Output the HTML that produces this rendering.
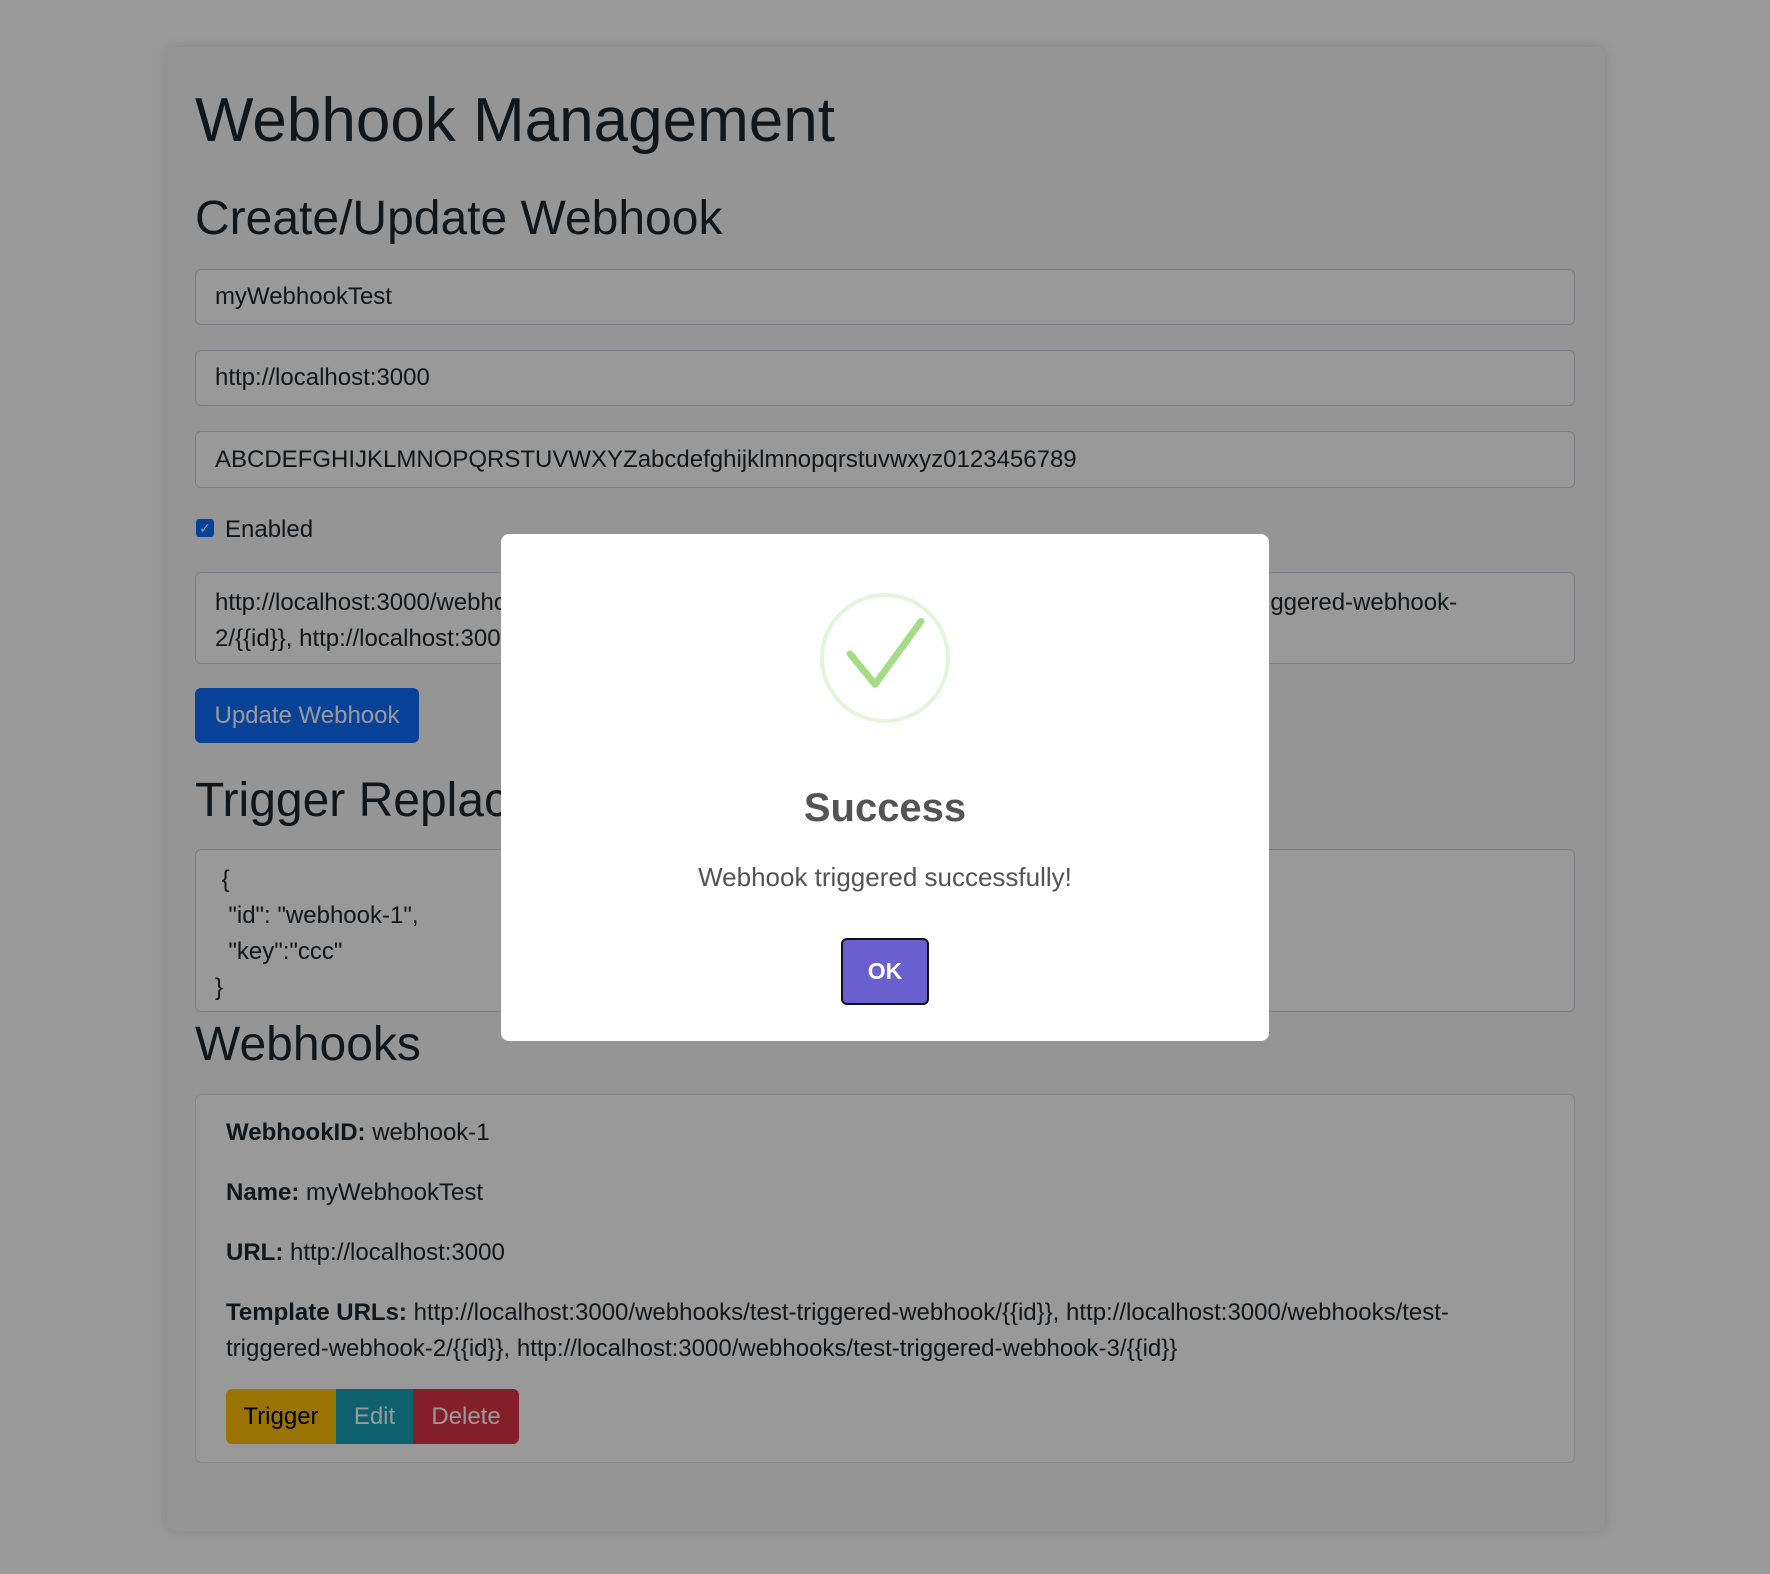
<!DOCTYPE html>
<html><head><meta charset="utf-8"><style>
*{box-sizing:border-box;margin:0;padding:0}
body{width:1770px;height:1574px;background:#fff;font-family:"Segoe UI","Liberation Sans",sans-serif;color:#212529;position:relative;overflow:hidden}
.card{position:absolute;left:167px;top:47px;width:1438px;height:1484px;background:#f8f9fa;border-radius:8px;box-shadow:0 0 12px rgba(0,0,0,.12)}
.a{position:absolute}
h1{position:absolute;left:195px;top:84px;font-size:62px;font-weight:500;line-height:1.2}
h2{position:absolute;left:195px;font-size:48px;font-weight:500;line-height:1.2}
.inp{position:absolute;left:195px;width:1380px;border:1px solid #ced4da;border-radius:6px;background:#fff;font-size:24px;padding:0 19px;display:flex;align-items:center;color:#212529}
.ta{align-items:flex-start;padding-top:12px;line-height:36px;white-space:pre}
.btn{position:absolute;font-size:24px;display:flex;align-items:center;justify-content:center}
.wc{position:absolute;left:195px;top:1094px;width:1380px;height:369px;border:1px solid #dee2e6;border-radius:6px;background:#fff}
.ln{position:absolute;left:226px;font-size:24px;line-height:36px}
.ov{position:absolute;inset:0;background:rgba(0,0,0,.4)}
.modal{position:absolute;left:501px;top:534px;width:768px;height:507px;background:#fff;border-radius:8px}
</style></head><body>
<div class="card"></div>
<h1>Webhook Management</h1>
<h2 style="top:190px">Create/Update Webhook</h2>
<div class="inp" style="top:269px;height:56px">myWebhookTest</div>
<div class="inp" style="top:350px;height:56px">http://localhost:3000</div>
<div class="inp" style="top:431px;height:57px">ABCDEFGHIJKLMNOPQRSTUVWXYZabcdefghijklmnopqrstuvwxyz0123456789</div>
<div class="a" style="left:196px;top:519px;width:18px;height:18px;background:#0d6efd;border-radius:3px;color:#fff;font-size:14px;line-height:18px;text-align:center">✓</div>
<div class="a" style="left:225px;top:516px;font-size:24px">Enabled</div>
<div class="inp ta" style="top:572px;height:92px">http://localhost:3000/webhooks/test-triggered-webhook/{{id}}, http://localhost:3000/webhooks/test-triggered-webhook-
2/{{id}}, http://localhost:3000/webhooks/test-triggered-webhook-3/{{id}}</div>
<div class="btn" style="left:195px;top:688px;width:224px;height:55px;background:#0d6efd;color:#fff;border-radius:6px">Update Webhook</div>
<h2 style="top:772px">Trigger Replacement</h2>
<div class="inp ta" style="top:849px;height:163px;padding-top:12px"> {
  "id": "webhook-1",
  "key":"ccc"
}</div>
<h2 style="top:1016px">Webhooks</h2>
<div class="wc"></div>
<div class="ln" style="top:1115px"><b>WebhookID:</b> webhook-1</div>
<div class="ln" style="top:1175px"><b>Name:</b> myWebhookTest</div>
<div class="ln" style="top:1235px"><b>URL:</b> http://localhost:3000</div>
<div class="ln" style="top:1295px;width:1280px"><b>Template URLs:</b> http://localhost:3000/webhooks/test-triggered-webhook/{{id}}, http://localhost:3000/webhooks/test-triggered-webhook-2/{{id}}, http://localhost:3000/webhooks/test-triggered-webhook-3/{{id}}</div>
<div class="btn" style="left:226px;top:1389px;width:110px;height:55px;background:#ffc107;color:#000;border-radius:6px 0 0 6px">Trigger</div>
<div class="btn" style="left:336px;top:1389px;width:77px;height:55px;background:#17a2b8;color:#fff">Edit</div>
<div class="btn" style="left:413px;top:1389px;width:106px;height:55px;background:#dc3545;color:#fff;border-radius:0 6px 6px 0">Delete</div>
<div class="ov"></div>
<div class="modal">
<svg class="a" style="left:317px;top:57px" width="134" height="134" viewBox="0 0 134 134"><circle cx="67" cy="67" r="63" fill="none" stroke="#e5f5dc" stroke-width="4"/><path d="M32 75 L57 108 L103 40" fill="none" stroke="#a5dc86" stroke-width="7" stroke-linecap="round" stroke-linejoin="round" transform="translate(0,-7) scale(1,0.93)"/></svg>
<div class="a" style="left:0;width:768px;top:252px;text-align:center;font-size:40px;font-weight:600;color:#545454">Success</div>
<div class="a" style="left:0;width:768px;top:328px;text-align:center;font-size:26px;color:#545454">Webhook triggered successfully!</div>
<div class="btn" style="left:340px;top:404px;width:88px;height:67px;background:#6a5fcf;color:#fff;border:2px solid #111;border-radius:6px;font-weight:600;font-size:23px">OK</div>
</div>
</body></html>
